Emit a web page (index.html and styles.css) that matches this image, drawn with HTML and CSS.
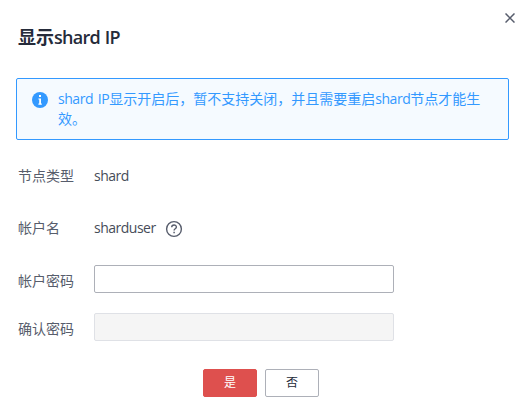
FILE: index.html
```html
<!DOCTYPE html>
<html lang="zh-CN">
<head>
<meta charset="utf-8">
<title>显示shard IP</title>
<link rel="stylesheet" href="styles.css">
</head>
<body>
<div class="dialog">
  <button class="close" aria-label="关闭">
    <svg width="10" height="10" viewBox="0 0 10 10"><path d="M.5.5l9 9M9.5.5l-9 9" stroke="#575d6c" stroke-width="1.5" fill="none"/></svg>
  </button>
  <h1 class="title">显示<span class="title-latin">shard IP</span></h1>
  <div class="alert">
    <svg class="alert-icon" width="16" height="16" viewBox="0 0 16 16"><circle cx="8" cy="8" r="8" fill="#3399ff"/><path d="M7 3h2v2H7zM6.4 6.4h2.6v5.2h.8v1.2H6.4v-1.2h.8v-4h-.8z" fill="#fff"/></svg>
    <p class="alert-text"><span class="latin">shard IP</span>显示开启后，暂不支持关闭，并且需要重启<span class="latin">shard</span>节点才能生效。</p>
  </div>
  <form class="form">
    <div class="row row-type"><span class="label">节点类型</span><span class="value">shard</span></div>
    <div class="row row-user"><span class="label">帐户名</span><span class="value">sharduser</span>
      <svg class="help" width="18" height="18" viewBox="0 0 18 18" fill="none" stroke="#575d6c"><circle cx="9" cy="9" r="7.4" stroke-width="1.4"/><path d="M6.7 7.3c0-3.1 4.7-3 4.7-.2 0 1.7-2.3 1.7-2.3 3.4" stroke-width="1.4"/><path d="M9.1 11.8v1.5" stroke-width="1.5"/></svg>
    </div>
    <div class="row row-field"><label class="label" for="pwd">帐户密码</label><input class="input" id="pwd" type="password"></div>
    <div class="row row-field"><label class="label" for="confirm">确认密码</label><input class="input input-muted" id="confirm" type="password" disabled></div>
    <div class="actions"><button type="button" class="btn btn-primary">是</button><button type="button" class="btn">否</button></div>
  </form>
</div>
</body>
</html>
```
FILE: styles.css
```css
* { box-sizing: border-box; }
body {
  margin: 0;
  background: #fff;
  font: 14px/20px "Noto Sans", "Noto Sans CJK SC", sans-serif;
  color: #575d6c;
}
.dialog { position: relative; width: 526px; height: 420px; padding: 25px 17px 0 16px; }
.close {
  position: absolute;
  top: 13px;
  right: 11px;
  width: 10px;
  height: 10px;
  padding: 0;
  border: 0;
  background: none;
}
.close svg { display: block; }
.title { margin: 0 0 29px 2px; font: 600 18px/24px "Open Sans", "Noto Sans CJK SC", sans-serif; color: #252b3a; }
.title-latin { letter-spacing: -0.75px; word-spacing: 1px; }
.alert {
  display: flex;
  height: 62px;
  padding: 10px 20px 10px 15px;
  border: 1px solid #3399ff;
  border-radius: 2px;
  background: #f5faff;
}
.alert-icon { flex: none; margin: 3px 10px 0 0; }
.alert-text { margin: 0; color: #3399ff; }
.latin { font-family: "Open Sans", sans-serif; font-size: 14px; letter-spacing: -0.45px; word-spacing: 1.5px; }
.form { padding: 22px 0 0 2px; }
.row { display: flex; align-items: center; height: 28px; }
.row-type { margin-bottom: 24px; }
.row-user { margin-bottom: 23px; }
.row-field { margin-bottom: 20px; }
.row-field .label { padding-top: 4px; }
.label { width: 76px; flex: none; }
.value { color: #464c59; font-family: "Open Sans", sans-serif; letter-spacing: -0.5px; }
.help { margin: 2px 0 0 9px; }
.input {
  width: 300px;
  height: 28px;
  padding: 0 8px;
  border: 1px solid #adb0b8;
  border-radius: 2px;
  background: #fff;
  outline: 0;
}
.input-muted { border-color: #dfe1e6; background: #f5f5f5; }
.actions { display: flex; gap: 8px; margin: 28px 0 0 185px; }
.btn {
  width: 54px;
  height: 28px;
  padding: 0;
  border: 1px solid #adb0b8;
  border-radius: 2px;
  background: #fff;
  color: #252b3a;
  font: 12px/26px "Open Sans", "Noto Sans CJK SC", sans-serif;
}
.btn-primary { border-color: #de504e; background: #de504e; color: #fff; }
```
